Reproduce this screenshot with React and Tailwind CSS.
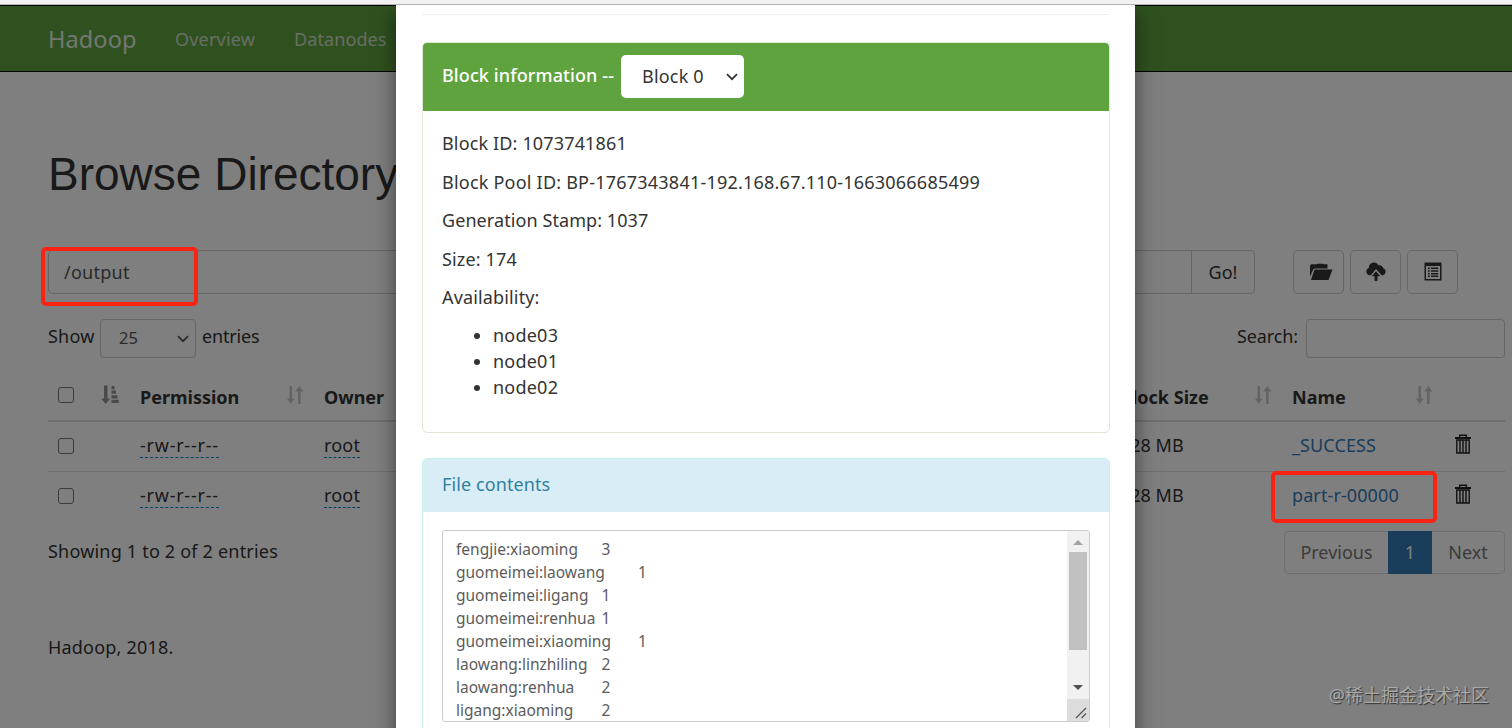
import React from 'react';

const files = [
  { name: '_SUCCESS', permission: '-rw-r--r--', owner: 'root', blockSize: '128 MB' },
  { name: 'part-r-00000', permission: '-rw-r--r--', owner: 'root', blockSize: '128 MB' },
];

const nodes = ['node03', 'node01', 'node02'];

const contents = [
  'fengjie:xiaoming\t3',
  'guomeimei:laowang\t1',
  'guomeimei:ligang\t1',
  'guomeimei:renhua\t1',
  'guomeimei:xiaoming\t1',
  'laowang:linzhiling\t2',
  'laowang:renhua\t2',
  'ligang:xiaoming\t2',
].join('\n');

const Chevron = ({ className }) => (
  <svg viewBox="0 0 12 8" className={className} fill="none" stroke="currentColor" strokeWidth="1.7">
    <path d="M1 1.2l5 5 5-5" />
  </svg>
);

const SortBoth = () => (
  <svg viewBox="0 0 18 20" className="w-[18px] h-5 text-[#c8c8c8]" fill="currentColor">
    <path d="M3.5 1h2.6v12.5h2.6L4.8 19 .8 13.5h2.7zM12 19V6.5H9.3L13.3 1l4 5.5h-2.7V19z" />
  </svg>
);

const SortAsc = () => (
  <svg viewBox="0 0 18 20" className="w-[18px] h-5 -ml-px text-[#959595]" fill="currentColor">
    <path d="M3 .5h3.5v13H9.2L4.7 19 .2 13.500H3zM10.500 1h3v3.200h-3zM10.500 5.600h4.500v3.200h-4.500zM10.500 10.200h6v3.200h-6zM10.500 14.800h7.300v3.200h-7.300z" />
  </svg>
);

const FolderOpen = () => (
  <svg viewBox="0 0 24 18" className="w-6 h-[18px] ml-1" fill="currentColor">
    <path d="M1 13.5V2.5L2.2 1.3H7.5L9 .8H14L15.2 1.3H18.5V5.500H5.500L4.200 6.500zM5.500 6.500H23.500L19.500 17H2z" />
  </svg>
);

const CloudUpload = () => (
  <svg viewBox="0 0 20 20" className="w-5 h-5" fill="currentColor">
    <path d="M3.8 13.2A3.7 3.7 0 0 1 2.8 6A5.200 5.200 0 0 1 12.500 3.200A4.500 4.500 0 0 1 17.300 6.300A3.600 3.600 0 0 1 16.800 13.200H15.600L10 7L4.900 13.200z" />
    <path d="M10 9.300l4.200 5h-2.700v4.700h-3v-4.700H5.800z" />
  </svg>
);

const ListAlt = () => (
  <svg viewBox="0 0 18 19" className="w-[18px] h-[19px] -mt-[2px]" fill="currentColor">
    <path fillRule="evenodd" d="M.5.5h17v18H.5zM2 4v13h14V4z" />
    <path d="M4 5.500h1.800v1.500H4zM7 5.500h7.200v1.500H7zM4 8.200h1.800v1.500H4zM7 8.200h7.200v1.500H7zM4 10.900h1.800v1.500H4zM7 10.900h7.200v1.500H7zM4 13.600h1.800v1.500H4zM7 13.600h7.200v1.500H7z" />
  </svg>
);

const Trash = () => (
  <svg viewBox="0 0 18 20" className="w-[18px] h-5 -ml-px -mt-[3px] text-[#222]" fill="none" stroke="currentColor">
    <path d="M1 4h16" strokeWidth="2" />
    <path d="M5.7 3.5V1.2h6.6v2.3" strokeWidth="1.5" />
    <path d="M2.8 6h12.4v13H2.8zM6 6v13M9 6v13M12 6v13" strokeWidth="1.4" />
  </svg>
);

const Checkbox = () => <span className="block w-4 h-4 rounded-[3px] border-[1.5px] border-[#767676]" />;

const ToolButton = ({ children }) => (
  <button className="w-[51px] h-11 flex items-center justify-center rounded-[5px] border border-[#ccc] text-[#333]">
    {children}
  </button>
);

const Navbar = () => (
  <nav className="h-[67px] bg-[#5fa33e] border-y border-[#080808] flex items-center pl-12">
    <span className="w-[127px] text-[23.5px] tracking-[0.1px] text-[#e6ece3] pt-[3px]">Hadoop</span>
    <span className="w-[119px] text-[18px] tracking-[0.2px] text-[#cfdcc8] pt-[2px]">Overview</span>
    <span className="text-[18px] tracking-[0.1px] text-[#cfdcc8] pt-[2px]">Datanodes</span>
  </nav>
);

const FileTable = () => (
  <div className="mt-3">
    <div className="grid grid-cols-[54px_38px_146px_38px_796px_134px_38px_123px_89px] items-center h-[52px] border-b-2 border-[#ddd] font-bold">
      <div className="pl-[10px]"><Checkbox /></div>
      <SortAsc />
      <span className="pt-[4px]">Permission</span>
      <SortBoth />
      <span className="pt-[4px]">Owner</span>
      <span className="pt-[4px]">Block Size</span>
      <SortBoth />
      <span className="pt-[4px]">Name</span>
      <SortBoth />
    </div>
    {files.map((file) => (
      <div
        key={file.name}
        className="grid grid-cols-[92px_184px_797px_171px_163px_50px] items-center h-[50px] pb-[2px] border-b border-[#ddd] last:h-[49px] last:border-b-0"
      >
        <div className="pl-[10px]"><Checkbox /></div>
        <div><span className="tracking-[0.75px] border-b border-dashed border-[#0088cc]">{file.permission}</span></div>
        <div><span className="tracking-[0.2px] border-b border-dashed border-[#0088cc]">{file.owner}</span></div>
        <span className="-ml-px">{file.blockSize}</span>
        <a className="text-[#337ab7] tracking-[0.1px]">{file.name}</a>
        <Trash />
      </div>
    ))}
  </div>
);

const Page = () => (
  <div className="h-[723px] bg-white">
    <Navbar />
    <div className="pl-12 pr-[7px]">
      <h1 className="pt-[75px] h-[178px] font-['Liberation_Sans',sans-serif] text-[46px] leading-[54px] whitespace-nowrap">
        Browse Directory
      </h1>

      <div className="flex h-11">
        <div className="w-[1144px] border border-[#ccc] rounded-l-[5px] pl-[15px] flex items-center tracking-[0.25px] text-[#555]">
          /output
        </div>
        <button className="w-[63px] border border-l-0 border-[#ccc] rounded-r-[5px]">Go!</button>
        <div className="ml-[38px] flex gap-[6px]">
          <ToolButton><FolderOpen /></ToolButton>
          <ToolButton><CloudUpload /></ToolButton>
          <ToolButton><ListAlt /></ToolButton>
        </div>
      </div>

      <div className="mt-[25px] h-[39px] flex justify-between">
        <div className="flex">
          <span className="w-[52px] leading-[35px] tracking-[0.2px]">Show</span>
          <span className="w-24 border border-[#ccc] rounded flex items-center justify-between pl-[18px] pr-[6px] text-[16.5px] text-[#555]">
            25
            <Chevron className="w-3 h-2" />
          </span>
          <span className="ml-[6px] leading-[35px] tracking-[-0.15px]">entries</span>
        </div>
        <div className="flex">
          <span className="leading-[35px] mr-2 tracking-[-0.1px]">Search:</span>
          <span className="w-[199px] border border-[#ccc] rounded" />
        </div>
      </div>

      <FileTable />

      <div className="mt-[10px] flex justify-between">
        <span className="leading-[41px] tracking-[0.2px]">Showing 1 to 2 of 2 entries</span>
        <div className="flex h-[43px] text-center leading-[41px] text-[#777]">
          <span className="w-[104px] border border-r-0 border-[#ddd] rounded-l-[5px]">Previous</span>
          <span className="w-11 bg-[#337ab7] border border-[#337ab7] text-white">1</span>
          <span className="w-[73px] border border-l-0 border-[#ddd] rounded-r-[5px]">Next</span>
        </div>
      </div>

      <p className="mt-[59px] leading-[28px] tracking-[0.2px]">Hadoop, 2018.</p>
    </div>
  </div>
);

const BlockInfo = () => (
  <section className="w-[688px] border border-[#dfe8d4] rounded-[5px]">
    <header className="h-[68px] bg-[#5fa33e] rounded-t-[4px] text-white flex items-start pl-[19px] pt-[12px]">
      <span className="w-[179px] leading-[41px] font-medium tracking-[0.1px]">Block information --</span>
      <span className="w-[123px] h-[43px] bg-white rounded-[5px] text-[#333] flex items-center justify-between pl-[21px] pr-[6px] tracking-[0.2px]">
        Block 0
        <Chevron className="w-3 h-2" />
      </span>
    </header>
    <div className="pl-[19px] pt-[20.4px] h-[321px] leading-[25.6px] tracking-[0.15px]">
      <p className="mb-[12.8px]">Block ID: 1073741861</p>
      <p className="mb-[12.8px] tracking-[0.22px]">Block Pool ID: BP-1767343841-192.168.67.110-1663066685499</p>
      <p className="mb-[12.8px] tracking-[0.08px]">Generation Stamp: 1037</p>
      <p className="mb-[12.8px]">Size: 174</p>
      <p className="mb-[12.8px]">Availability:</p>
      <ul className="list-disc pl-[51px] tracking-[0.22px]">
        {nodes.map((node) => (
          <li key={node}>{node}</li>
        ))}
      </ul>
    </div>
  </section>
);

const FileContents = () => (
  <section className="mt-[25px] w-[688px] h-[300px] border border-[#c9efe9] rounded-[5px]">
    <header className="h-[53px] bg-[#d9edf7] rounded-t-[4px] pl-[19px] leading-[51px] tracking-[0.1px] text-[#31809f]">
      File contents
    </header>
    <div className="mt-[18px] ml-[19px] w-[648px] h-[192px] border border-[#ccc] rounded-[3px] flex justify-between overflow-hidden">
      <pre className="pl-[13px] pt-[7px] font-['Noto_Sans',sans-serif] text-[15.5px] leading-[23px] text-[#5c5c5c] [tab-size:36.4px]">
        {contents}
      </pre>
      <div className="w-[22px] bg-[#f1f1f1] flex flex-col items-center">
        <svg viewBox="0 0 10 5" className="mt-[9px] w-[10px] h-[5px]" fill="#a3a3a3"><path d="M0 5l5-5 5 5z" /></svg>
        <div className="mt-[7px] w-[18px] h-[98px] bg-[#c1c1c1]" />
        <svg viewBox="0 0 10 5" className="mt-[35px] w-[10px] h-[5px]" fill="#505050"><path d="M0 0l5 5 5-5z" /></svg>
        <div className="mt-auto w-[22px] h-[22px] bg-[#dcdcdc] flex items-end justify-end p-[2px]">
          <svg viewBox="0 0 12 12" className="w-3 h-3" fill="none" stroke="#555" strokeWidth="1.3">
            <path d="M1 11L11 1M6.5 11L11 6.5" />
          </svg>
        </div>
      </div>
    </div>
  </section>
);

export default function App() {
  return (
    <div className="relative w-[1512px] h-[728px] overflow-hidden font-['Noto_Sans','Noto_Sans_CJK_SC',sans-serif] text-[18px] text-[#333]">
      <div className="h-[5px] bg-[#f1f1f1] border-b border-[#b5b5b5]" />
      <Page />

      <div className="absolute inset-x-0 top-[5px] bottom-0 bg-black/50 overflow-hidden">
        <div className="ml-[396px] w-[739px] h-[740px] bg-white px-[26px] shadow-[0_6px_20px_rgba(0,0,0,0.5)]">
          <div className="h-[10px] border-b border-[#eee] mb-[27px]" />
          <BlockInfo />
          <FileContents />
        </div>
      </div>

      <div className="absolute left-[41px] top-[247px] w-[157px] h-[59px] border-4 border-[#fa2314] rounded-[5px]" />
      <div className="absolute left-[1271px] top-[471px] w-[166px] h-[52px] border-4 border-[#fa2314] rounded-[5px]" />
      <span className="absolute right-[23px] top-[682px] text-[18px] leading-[26px] text-[#a8a8a8] [text-shadow:1px_1px_1px_#333] whitespace-nowrap">
        @稀土掘金技术社区
      </span>
    </div>
  );
}
